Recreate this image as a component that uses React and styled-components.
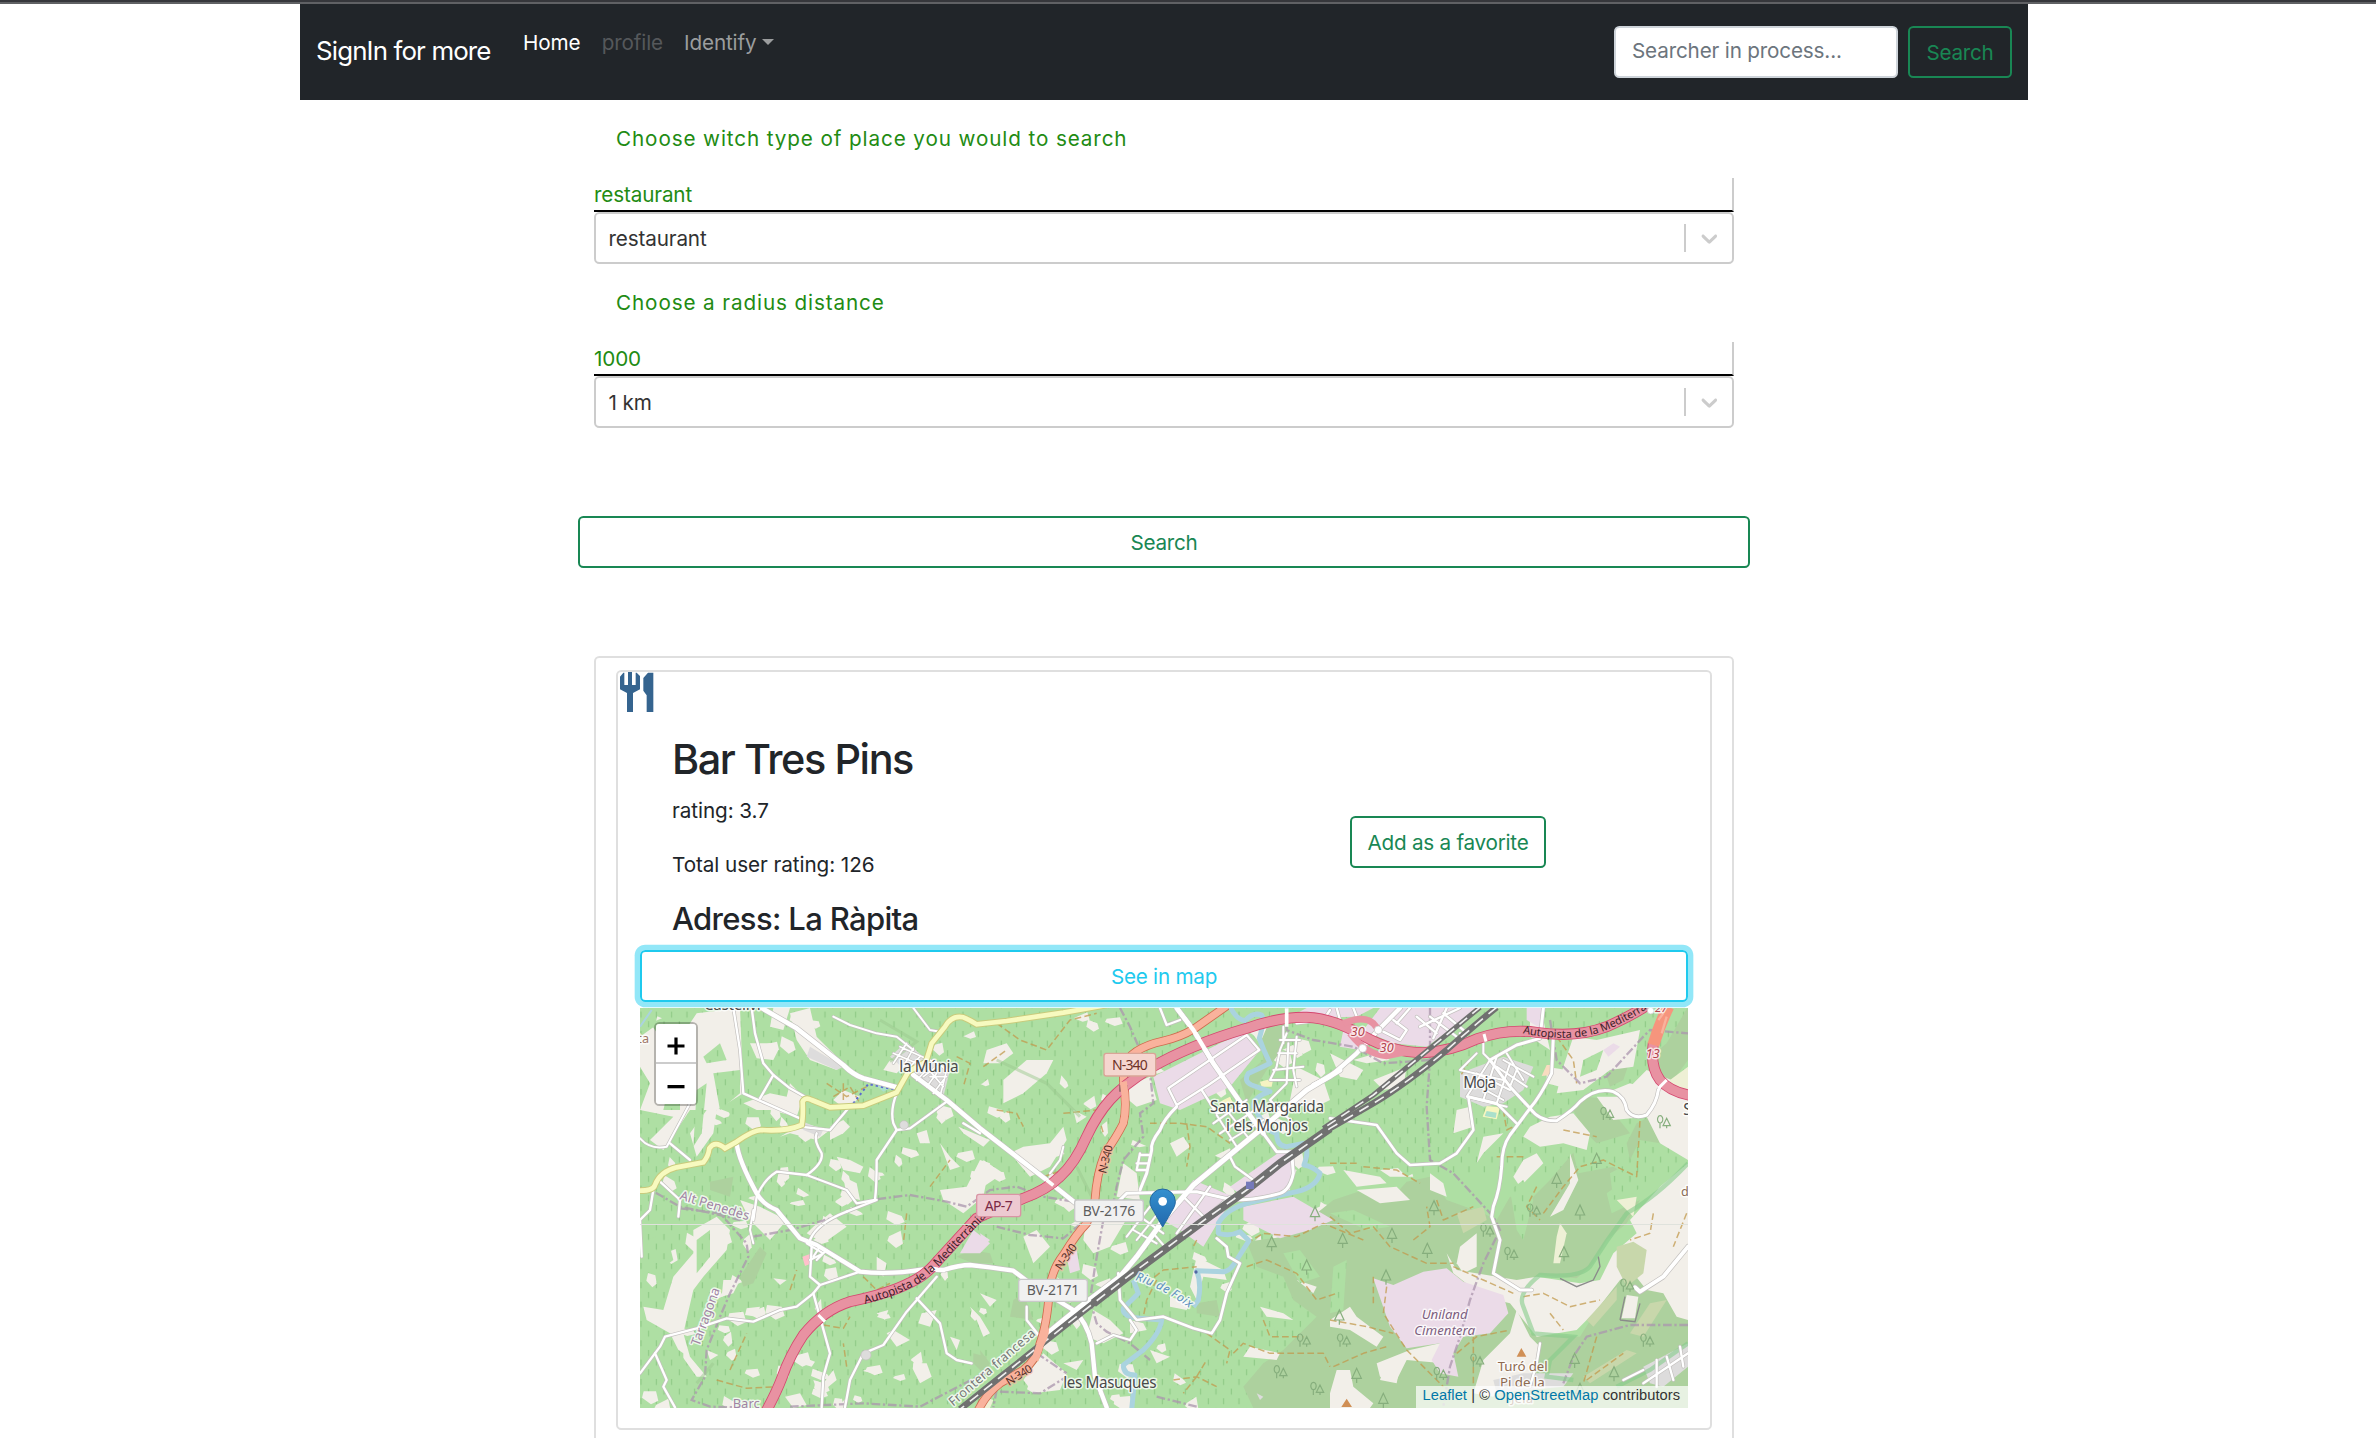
import React from "react";
import styled, { createGlobalStyle } from "styled-components";

const GlobalStyle = createGlobalStyle`
  *, *::before, *::after { box-sizing: border-box; }
  html, body { margin: 0; padding: 0; background: #fff; overflow: hidden; }
  body {
    font-family: Inter, "Liberation Sans", sans-serif;
    font-size: 20.7px;
    line-height: 32px;
    color: #212529;
  }
`;

const Page = styled.div`
  height: 1438px;
  overflow: hidden;
  display: flex;
  flex-direction: column;
`;

const WindowEdge = styled.div`
  flex: none;
  height: 4px;
  background: #36373b;
  border-bottom: 2px solid #606164;
`;

const Content = styled.div`
  flex: none;
  width: 2328px;
  display: flex;
  flex-direction: column;
  align-items: center;
`;

const Navbar = styled.nav`
  width: 1728px;
  height: 96px;
  padding: 0 16px;
  display: flex;
  align-items: center;
  background: #212529;
`;

const Brand = styled.a`
  color: #fff;
  font-size: 25.9px;
  line-height: 40px;
  letter-spacing: -0.87px;
  margin: -2px 32px 0 0;
  width: 175px;
  white-space: nowrap;
`;

const NavList = styled.div`
  display: flex;
  gap: 21.3px;
  margin-bottom: 18px;
  flex: 1;
`;

const NavItem = styled.a`
  color: ${(p) => p.$color};
  width: ${(p) => p.$width}px;
  letter-spacing: -0.15px;
  display: flex;
  align-items: center;
  white-space: nowrap;
`;

const Caret = styled.span`
  margin: -3px 0 0 6px;
  border-top: 6.4px solid currentColor;
  border-left: 6.4px solid transparent;
  border-right: 6.4px solid transparent;
`;

const SearchInput = styled.input`
  width: 284px;
  height: 52px;
  margin-right: 10px;
  padding: 6px 16px 10px;
  border: 2px solid #ced4da;
  border-radius: 5.3px;
  background: #fff;
  font: inherit;
  letter-spacing: -0.17px;
  &::placeholder { color: #6c757d; opacity: 1; }
`;

const Button = styled.button`
  display: block;
  height: 52px;
  width: ${(p) => p.$width}px;
  padding: 9px 0 7px;
  border: 2px solid ${(p) => p.$color};
  border-radius: 5.3px;
  background: transparent;
  color: ${(p) => p.$color};
  font: inherit;
  line-height: 32px;
  letter-spacing: -0.25px;
  text-align: center;
  white-space: nowrap;
  box-shadow: ${(p) => (p.$focused ? "0 0 0 5.33px rgba(13, 202, 240, 0.45)" : "none")};
`;

const Field = styled.div`
  width: 1140px;
  margin-top: 22px;
`;

const FieldLabel = styled.div`
  padding-top: 1px;
  margin: 0 0 23px 22px;
  color: #228b13;
  letter-spacing: 0.88px;
  white-space: nowrap;
`;

const FieldValue = styled.div`
  height: 34px;
  padding-top: 1px;
  line-height: 31px;
  color: #228b13;
  letter-spacing: -0.15px;
  border-right: 2px solid #ccc;
  border-bottom: 2px solid #000;
`;

const Select = styled.div`
  height: 52px;
  display: flex;
  align-items: center;
  padding-left: 12.5px;
  border: 2px solid #ccc;
  border-radius: 5.3px;
  color: #333;
  letter-spacing: -0.15px;
`;

const SelectText = styled.span`
  flex: 1;
  padding-top: 2px;
`;

const Separator = styled.span`
  width: 2px;
  height: 28px;
  margin: 0 10px;
  background: #ccc;
`;

const Chevron = styled.svg`
  width: 26.67px;
  height: 26.67px;
  margin-right: 9.3px;
  fill: #ccc;
`;

const SearchRow = styled.div`
  margin: 88px 0;
`;

const OuterCard = styled.section`
  width: 1140px;
  padding: 12px 20px 60px;
  border: 2px solid #dfdfdf;
  border-radius: 5.3px;
`;

const PlaceCard = styled.article`
  border: 2px solid #dfdfdf;
  border-radius: 5.3px;
  height: 760px;
`;

const PlaceIcon = styled.svg`
  display: block;
  width: 40px;
  height: 40px;
`;

const PlaceInfo = styled.div`
  display: flex;
  align-items: center;
  margin-top: 21px;
  height: 205px;
  margin-bottom: 12px;
`;

const PlaceText = styled.div`
  width: 732px;
  padding: 2px 0 0 54px;
`;

const PlaceName = styled.h2`
  margin: 0 0 10px;
  font-size: 41.4px;
  line-height: 51.2px;
  font-weight: 500;
  letter-spacing: -1.42px;
`;

const PlaceLine = styled.p`
  margin: 0 0 22px;
  letter-spacing: -0.07px;
`;

const PlaceAddress = styled.h4`
  margin: -3.5px 0 0.5px;
  font-size: 31px;
  line-height: 38.4px;
  font-weight: 500;
  letter-spacing: -0.66px;
`;

const FavoriteSlot = styled.div`
  padding-top: 13px;
`;

const MapSection = styled.div`
  padding: 0 20px 0 22px;
`;

const MapFrame = styled.div`
  position: relative;
  width: 1048px;
  height: 400px;
  margin-top: 6px;
  overflow: hidden;
`;

const MapCanvas = styled.svg`
  display: block;
  width: 1048px;
  height: 400px;
`;

const ZoomControl = styled.div`
  position: absolute;
  left: 14px;
  top: 14px;
  width: 44px;
  border: 2px solid rgba(0, 0, 0, 0.25);
  border-radius: 5.3px;
  background-clip: padding-box;
`;

const ZoomButton = styled.div`
  height: 40px;
  padding-top: ${(p) => (p.$last ? "1px" : "6px")};
  display: flex;
  align-items: center;
  justify-content: center;
  background: #fff;
  border-radius: ${(p) => (p.$last ? "0 0 3px 3px" : "3px 3px 0 0")};
  border-bottom: ${(p) => (p.$last ? "none" : "2px solid #ccc")};
  svg { width: 18px; height: 18px; fill: #000; }
`;

const Attribution = styled.div`
  position: absolute;
  right: 0;
  bottom: 0;
  width: 272px;
  height: 22px;
  padding-left: 6.5px;
  background: rgba(255, 255, 255, 0.7);
  font-family: "Liberation Sans", Arial, sans-serif;
  font-size: 14.67px;
  line-height: 19px;
  letter-spacing: 0.07px;
  color: #333;
  white-space: nowrap;
  a { color: #0078a8; }
`;

/* ---- map artwork; units are thirds of a pixel ---- */

const FOREST = [
  "1850,725 1950,712 2060,640 2110,600 2200,570 2290,590 2330,545 2400,530 2450,600 2560,640 2600,660 2640,590 2700,600 2760,540 2830,458 2845,520 2950,500 3000,530 2930,580 2945,640 3030,600 2990,670 2930,720 2890,790 2840,835 2730,825 2680,880 2700,1000 2850,1010 2950,850 2960,760 3010,720 3050,740 3050,800 3130,830 3174,960 3174,1224 1870,1224 1840,1160 1900,1090 1960,1050 2010,1000 2060,950 1990,900 1960,830 1880,800",
  "3110,130 3174,20 3174,180 3130,240 3060,250 3050,180",
  "2830,330 2870,290 2950,300 2960,350 3000,400 2900,430 2860,390",
  "3020,370 3070,345 3110,390 3090,430 3030,420 3000,480 2990,430",
  "2930,230 2990,140 3000,180 2980,240 2940,260",
  "240,545 310,530 300,590 240,570",
  "340,860 330,830 390,740 410,760 370,850",
  "1030,790 980,770 1020,750 1080,760 1090,790",
  "1180,880 1210,960 1140,950 1150,900",
  "1890,90 1960,60 1970,130 1910,210 1850,310 1830,240 1900,180",
  "1700,910 1760,900 1770,950 1700,940",
  "1030,1060 1070,1070 1060,1120 1030,1090",
  "1050,1050 1080,1090 1060,1140",
];

const BEIGE = [
  "30,110 100,60 160,100 200,40 330,24 340,280 260,330 250,400 200,470 180,400 230,330 180,330 100,450 60,420 130,350 30,330 60,250 30,200",
  "430,24 480,24 460,90 420,80", "420,130 445,150 430,180 380,175 360,130", "480,40 540,24 560,110 640,190 620,210 540,180 500,120",
  "380,330 340,310 420,280 470,290 480,250 520,290 500,350 420,330", "450,410 520,370 600,390 560,420 480,400",
  "610,300 640,270 690,290 650,330", "780,180 830,190 800,220 760,210", "330,600 390,620 470,660 420,720 360,660",
  "620,470 660,480 700,500 690,520 640,510", "640,530 680,550 690,600 650,590", "930,430 960,470 990,500 960,510",
  "930,570 1010,560 1050,480 1080,490 1060,590 1000,640 940,600", "985,380 1080,420 1060,440 1000,400", "860,400 890,390 900,430 870,430",
  "600,380 640,360 660,380 640,400 600,420", "190,690 260,650 300,690 290,750 220,830 190,870 160,1000 180,1070 230,1130 200,1130 150,1060 120,1000 50,960 40,920 100,930 130,830 190,760",
  "280,840 330,840 310,880 275,890", "430,835 470,840 450,855", "350,925 390,920 380,950 345,945", "515,1070 555,1085 545,1100 510,1090",
  "230,1050 265,1065 240,1080", "550,1140 580,1150 610,1110 620,1140 590,1165 555,1155", "465,1190 510,1180 530,1215 490,1224",
  "740,940 775,930 765,960", "790,990 840,1020 800,1040 770,1000", "875,940 920,930 900,980 865,970", "850,1090 890,1090 905,1130 870,1150 850,1110",
  "960,1010 990,1020 980,1050", "1020,920 1050,950 1080,1000 1060,1010 1040,960", "550,680 600,640 650,680 580,730 530,700", "740,770 770,790 760,830 740,810",
  "1120,240 1190,180 1270,180 1250,220 1180,280 1120,310", "1070,150 1130,130 1150,160 1110,190 1060,190", "1330,330 1370,350 1340,370",
  "1060,480 1120,520 1060,560", "1140,460 1180,440 1260,430 1300,380 1310,420 1260,500 1200,530", "1460,270 1560,230 1580,300 1520,320",
  "1180,710 1220,690 1260,740 1210,790", "1370,650 1500,640 1440,740 1390,760 1360,720", "1050,880 1100,900 1080,920", "1280,830 1340,880 1320,910",
  "1390,930 1440,960 1480,1000 1420,1030 1370,1010", "1300,1090 1360,1080 1340,1110", "1240,1060 1310,1120 1290,1170 1210,1180 1180,1140", "1560,1050 1620,1070 1580,1090",
  "1700,770 1780,810 1790,840 1720,830 1700,900 1680,860", "1620,890 1680,910 1670,930 1620,920", "1500,960 1540,970 1550,990 1500,1000",
  "1620,430 1660,410 1680,440 1640,470", "1480,490 1520,520 1530,600 1460,590", "1850,80 1920,60 1890,130", "2000,200 2080,240 2100,300 2040,330 1980,300", "1930,480 2000,510 1980,560",
  "2100,160 2200,210 2180,240 2130,230", "2230,240 2330,200 2320,260 2260,270", "2170,180 2240,160 2280,180 2210,190", "2700,40 2740,60 2760,150 2700,110",
  "2750,200 2810,210 2790,260 2750,250", "2830,110 2900,120 3030,90 3010,200 2940,210 2860,270 2780,280 2800,200", "3000,260 3050,210 3174,260 3174,480 3090,430 3050,350 2950,360 2900,290 2980,290",
  "2700,380 2760,350 2830,340 2880,400 2870,450 2800,430 2730,440 2680,410", "2950,270 3000,250 3090,280 3020,350", "2480,330 2520,320 2530,380 2470,400",
  "2560,410 2620,400 2560,460 2540,490", "2680,480 2720,460 2740,490 2670,560 2650,530", "2140,510 2250,530 2270,550 2180,560", "2180,570 2300,560 2340,600 2250,610",
  "2250,510 2340,500 2350,530 2280,530", "2400,520 2440,550 2450,590 2400,570", "2820,460 2845,540 2800,630 2760,650 2820,550",
  "2490,740 2540,700 2540,800 2500,820 2480,790", "2450,760 2480,810 2660,840 2720,830 2850,850 2910,840 2950,760 3020,700 3000,660 3090,560 3174,490 3174,960 3140,950 3100,880 3050,870 3010,820 2970,840 2900,930 2840,990 2720,1010 2680,960 2640,910 2560,890 2470,820",
  "2100,960 2160,920 2180,950 2260,1010 2240,1040 2160,990 2100,980", "2240,1090 2340,1050 2430,1030 2440,1090 2330,1080 2300,1140 2250,1130",
  "2560,1080 2640,1000 2660,930 2700,1010 2730,1040 2700,1160 2620,1130 2590,1190 2530,1180", "2100,1180 2120,1110 2160,1110 2170,1160 2230,1210 2220,1224 2100,1224",
  "2260,1110 2310,1100 2300,1150 2250,1140", "2000,840 2060,860 2050,880", "1890,920 1960,940 1990,960 1910,950", "1860,1040 1950,1060 1940,1080 1840,1070",
  "1680,660 1730,640 1720,660",
];

const VINEYARD = [
  "2300,500 2420,420 2460,440 2430,480 2330,530", "2640,570 2680,540 2710,600 2680,720 2660,690", "2110,800 2150,780 2140,930 2100,940",
  "2940,520 3050,460 3090,510 3010,580 2950,600", "2100,640 2170,630 2280,680 2210,690", "1960,760 2010,750 2070,830 2010,850",
  "1870,960 1930,970 1940,1010 1850,1030",
];

const CLEARINGS = [
  "60,70 130,40 150,80 90,110", "220,170 270,130 290,180 230,190", "200,270 230,250 215,400 190,440", "110,290 150,260 150,330 100,330",
  "250,220 330,210 330,280 270,330", "50,720 110,700 130,780 90,810 60,770", "200,720 240,690 240,770 200,820", "280,400 310,310 315,420 290,440",
  "100,1020 160,1060 160,1090 100,1050", "30,40 60,30 70,60 35,80", "150,150 190,120 180,170", "2860,180 2920,150 2900,210 2850,230",
];

const PURPLE = [
  "1570,230 1770,130 1850,95 1890,150 1800,260 1650,330 1590,310",
  "1800,560 1950,455 1985,450 1980,570 1860,605", "1600,660 1690,540 1810,590 1780,640 1720,740 1650,690", "1840,620 1990,590 2110,660 2040,690 1950,715 1840,660",
  "2030,24 2230,24 2180,50 2100,52 2000,40", "2250,24 2550,24 2390,140 2290,130 2220,100 2190,150 2130,140 2140,90 2200,90",
  "2230,835 2290,855 2380,815 2450,805 2500,845 2620,885 2635,940 2580,1000 2500,1010 2470,1060 2485,1130 2430,1120 2405,1080 2430,1030 2330,1045 2280,980",
  "2690,24 2740,24 2740,90 2690,60", "2920,150 2950,130 2970,140 2935,170", "1310,770 1340,750 1350,810 1320,820", "990,760 1030,690 1080,730 1050,760",
  "1050,700 1080,720 1060,740",
];

const GREY_AREAS = [
  "780,170 830,125 890,180 960,210 940,290 850,230", "540,140 640,200 620,210 530,170", "2490,220 2620,170 2710,200 2680,270 2620,310 2560,320 2490,290",
  "520,365 580,390 570,410 520,390", "3040,1100 3174,1030 3174,1100 3100,1160 3060,1150", "2590,1140 2680,1120 2830,1120 2800,1160 2600,1180",
  "1880,1180 1900,1190 1890,1200",
];

const SCRUB = [
  "2960,740 3010,725 3050,750 3040,820 2990,860 2960,800", "2870,960 2960,860 2960,900 2890,980", "2480,640 2560,620 2570,660 2500,700",
  "3000,1000 3060,910 3110,900 3040,1010", "2860,1130 2990,1050 3020,1060 2880,1150",
];

const PALE = ["2960,600 3020,590 3010,650", "3120,240 3174,200 3174,270 3120,250", "2790,670 2810,700 2790,790 2770,790 2780,710", "1060,1190 1090,1200 1080,1224 1050,1224"];

const WHITE_ROADS = [
  [14, "M395 24L500 85L640 195Q670 225 700 235L800 262"],
  [14, "M850 225L950 300L1050 385L1250 540L1340 612"],
  [13, "M320 430Q325 480 380 580Q400 615 440 630L510 715L560 735L690 815Q780 825 880 808L940 810Q990 795 1020 795L1080 802L1150 812L1200 850L1330 930Q1370 965 1385 1030L1395 1130L1430 1222"],
  [15, "M2130 210L2030 270L1890 390L1690 555L1600 660L1520 770L1470 830L1350 920L1240 1010"],
  [14, "M1640 24L1690 90L1750 190L1840 320L1900 400"],
  [9, "M1900 400L1940 455L1985 455L1990 520Q1980 570 1950 580Q1880 600 1810 600L1700 575L1490 580L1450 620"],
  [9, "M1640 320Q1600 360 1590 390Q1560 430 1565 450L1550 520L1530 570"],
  [13, "M2050 255L2100 230L2180 160L2245 90L2310 24"],
  [9, "M2740 24L2730 115L2660 135L2580 180L2640 260L2700 325Q2730 365 2780 362Q2830 330 2850 305Q2900 260 2950 275Q2985 290 2990 330Q3010 360 3050 345Q3080 310 3085 270L3100 245"],
  [9, "M2770 110L2765 220Q2730 290 2700 325L2640 405Q2615 440 2615 500Q2610 570 2590 620L2585 650L2610 720L2590 820L2670 870L2705 870"],
  [8, "M2100 355L2240 375L2300 460L2340 495L2430 490L2480 460L2530 390L2515 290L2600 310L2660 370"],
  [12, "M3174 740L3100 830L3030 875L3015 862"],
  [7, "M310 24L330 150L340 280L430 320L510 355"],
  [7, "M365 24L375 100L400 190L430 225L390 295"],
  [7, "M430 225L480 265L525 290"],
  [7, "M800 280Q780 330 790 370L800 390L740 480Q740 560 735 600L680 610L650 570L530 525L440 515Q400 540 380 590L370 660"],
  [7, "M950 305L840 385L800 390"], [7, "M655 325L600 390L510 380"],
  [7, "M560 400Q550 420 575 460Q580 490 530 525"], [6, "M850 24L900 90L930 95"], [6, "M610 50L660 75L740 100L800 110L850 150"],
  [7, "M570 855L690 815"], [7, "M30 1120L90 1040L105 1010L200 985L290 955L370 965L450 930L500 920L550 880L570 855L540 830L545 740"],
  [7, "M550 880L575 970L600 1060L580 1130L575 1222"], [7, "M920 830L830 935L760 1035L700 1060Q680 1100 660 1140L645 1222"],
  [7, "M860 895L930 970L950 1060L980 1080L1025 1090"], [7, "M75 1060L110 1140L100 1160L135 1222"],
  [6, "M30 415Q60 450 110 440L180 310"], [7, "M90 545L150 600L145 650"], [7, "M120 430L180 480"], [7, "M70 570L60 630L30 660L35 770"],
  [6, "M370 630L360 690L370 730"], [7, "M540 720Q560 670 650 635"], [7, "M650 635L740 600"],
  [8, "M1465 820L1470 900L1520 960L1600 950L1690 985L1745 1000L1770 960L1790 880L1830 790L1795 770L1790 740L1760 715"],
  [7, "M1400 1030L1450 1005L1500 1020L1520 990L1500 960"], [7, "M1190 920L1190 960L1230 1010"],
  [7, "M1615 265L1850 105L1888 150L1735 255L1640 315Z"], [7, "M1715 270L1760 340L1850 320"],
  [7, "M1590 24L1610 75L1650 60"], [6, "M1760 345L1820 440M1790 330L1860 420M1750 370L1850 300M1770 400L1890 320M1800 420L1900 360"],
  [6, "M1970 100L1950 150L1940 200L1920 240M2000 110L1990 210L2000 260M1950 120L2010 120M1945 160L2000 160M1930 210L2020 200M1920 240L2010 240M1960 80L1960 130M1975 130L1970 250L1920 300L1990 370"],
  [6, "M1530 650L1600 700M1510 690L1580 730M1560 620L1490 710M1600 620L1520 720M1620 640L1540 750M1570 700L1600 735"],
  [7, "M1660 590L1720 650M1740 560L1640 700M1800 590L1740 640"],
  [7, "M1800 470L1815 500L1870 540"], [7, "M1530 460L1520 510M1560 465L1530 465M1555 490L1520 490M1550 510L1520 510"],
  [7, "M2000 70L2080 60L2100 30M2120 24L2130 60M2170 24L2180 50"],
  [7, "M2260 95L2310 120L2330 90L2290 60M2340 24L2300 70M2410 115L2450 24M2360 50L2420 100M2370 80L2490 24M2400 50L2480 110M2440 40L2500 90M2490 100L2510 120"],
  [6, "M2560 100L2560 160L2580 180L2510 290L2630 320M2540 160L2490 210L2620 240M2540 220L2640 270M2530 250L2620 300M2600 170L2560 300M2630 160L2680 240M2640 190L2600 310M2660 210L2640 260M2600 200L2690 260M2620 180L2710 230"],
  [5, "M790 160L860 190M810 140L920 190M830 130L790 190M850 145L820 200M870 170L830 210M880 190L940 260M910 180L950 210L930 290L850 220M890 210L860 240M920 220L890 260M940 240L910 280M900 230L950 230M880 230L920 200"],
  [6, "M530 730L580 760L540 780M570 740L550 770M590 750L560 780"],
  [7, "M1000 370L1050 400M1395 1130L1450 1150M1420 1150L1410 1180"],
  [7, "M2730 1030L2720 1090L2700 1160M2980 1140L3040 1110M3080 1080L3080 1160M3110 1070L3130 1140M3150 1040L3160 1100M3040 1150L3174 1060"],
  [6, "M1300 440L1290 480L1260 520"],
];

const TRACKS = [
  "M1100 70L1170 120L1250 150L1320 60L1400 40", "M1060 200L1130 150", "M1560 370L1650 370L1730 380L1800 430", "M1670 370L1680 440L1670 500",
  "M1240 530L1330 500M1300 340L1400 330L1420 400", "M580 975L640 985L660 950", "M480 870L500 810", "M260 1140L350 1165L440 1160", "M300 1110L350 1000",
  "M830 640L820 730M650 1100L640 1030", "M590 250L650 290L710 260M610 290L660 260L690 310M640 300L640 250", "M900 560L960 480M980 170L1020 190L1000 260",
  "M2420 600L2440 660L2530 620", "M2520 180L2490 230M2620 330L2630 390L2670 370", "M2200 500L2300 510L2370 550M2100 490L2180 490",
  "M2740 640L2800 560L2850 500L2920 480L3020 530L3030 360", "M2800 390L2900 410", "M2780 110L2830 180L2840 250", "M2100 650L2160 700L2230 680L2280 740L2390 790L2470 790",
  "M1850 730L1900 700L2000 710L2080 670L2200 720", "M2270 860L2260 940L2330 1050L2440 1160", "M2470 800L2560 840L2650 880M2230 830L2230 910",
  "M1700 720L1690 740M1550 850L1600 810L1700 800M1580 840L1550 900L1540 950", "M1850 800L1910 780L2000 820L2060 900L2120 880", "M1810 1060L1840 1030L1920 1060L2080 1060L2100 1100",
  "M1630 1140L1700 1130L1760 1160M1700 1130L1730 1080M1700 1130L1660 1180", "M2680 890L2740 880L2820 920L2910 900", "M2480 1060L2540 1010L2640 990M2530 1010L2530 1150",
  "M2760 940L2800 990M2900 1010L2880 1080L2860 1150M2870 1140L2980 1060", "M3070 640L3060 700L3000 720M3170 640L3130 740", "M2720 560L2690 620L2730 660M2600 470L2690 470M2350 720L2400 680L2390 620",
  "M1900 960L1920 1010L2020 1010M1730 1000L1800 1050L1790 1090", "M2110 1100L2200 1060L2270 1040M2100 960L2210 980L2290 1000", "M700 830L740 870L780 850M1100 330L1160 340L1180 380",
];

const BORDERS = [
  "M30 565L80 580L150 620L270 645L330 660", "M150 625L270 640L350 730L355 770L300 880L270 950L230 1050L225 1130L185 1200L240 1220L330 1222",
  "M370 710L480 690L620 650L720 600L840 585L950 605L1010 620L1080 570L1160 560L1240 590L1330 605", "M1470 24L1500 80L1530 150L1560 220L1570 310L1530 340L1540 410L1480 480L1460 560L1450 610",
  "M1100 680L1200 705L1300 715L1400 630M1420 660L1395 800L1380 900L1400 970L1430 995L1500 1030L1560 1080", "M1970 24L1970 90L2050 120L2170 140L2260 190L2400 180",
  "M2400 24L2400 180L2390 320L2400 480L2470 520L2590 650L2610 690L2560 790L2520 900L2490 1010L2460 1100L2440 1220", "M2760 60L2780 180L2850 250L2930 230L3040 110L3060 90L3174 100",
  "M480 1220L700 1210L870 1220L1080 1110", "M1110 1175L1230 1180L1310 1130M1220 1060L1310 1120M1100 1170L1090 1222M1580 1190L1700 1220", "M3174 975L3000 975L2870 1010L2830 1070L2800 1150",
];

const TREES = [[2138, 740], [2286, 725], [2412, 642], [2128, 970], [2392, 770], [2268, 850], [2850, 655], [2802, 780], [2834, 1100], [2952, 1140], [1925, 750], [2055, 660], [2030, 820], [2780, 560], [2900, 500], [2180, 1145], [2260, 1220], [2850, 1190]];
const BUSHES = [[2700, 650], [2632, 780], [2560, 710], [2920, 360], [3090, 385], [2130, 1040], [2980, 875], [3040, 1040], [2010, 1040], [1940, 1135], [2050, 1185], [2420, 1140], [2530, 1100]];

const MOTORWAY = "M405 1240Q440 1175 455 1135Q480 1065 520 1005Q580 930 660 905Q780 880 840 848Q890 825 925 780L1040 655Q1070 640 1180 595Q1250 570 1290 530Q1335 490 1370 410Q1400 345 1440 300Q1480 255 1560 205Q1680 135 1850 85Q1950 50 2030 52Q2110 55 2200 108Q2290 158 2380 158Q2460 155 2540 117Q2630 85 2720 97Q2840 115 2930 80Q3010 45 3060 10";
const MOTORWAY_EAST = "M3070 130Q3060 200 3090 240Q3120 275 3180 286";
const NATIONAL = "M1790 18L1690 88Q1650 112 1600 123Q1500 145 1482 200L1480 240Q1492 320 1480 370Q1460 410 1425 460Q1400 520 1395 600L1370 670Q1340 700 1300 765Q1265 810 1258 870Q1252 970 1230 1030Q1220 1080 1180 1110L1110 1150Q1070 1180 1045 1230";
const SECONDARY = "M30 572Q70 572 75 555Q90 515 140 502L220 487Q235 470 238 445Q255 420 285 445L320 425Q370 390 395 390Q470 395 515 375Q520 350 518 305Q525 290 545 300L600 322L700 317L800 277L835 215L888 185L905 130L945 80Q965 45 1000 52Q1020 60 1040 73L1130 63L1300 38L1430 15";
const RAIL = "M2600 22Q2540 70 2450 150Q2330 250 2230 310L2100 385L1950 490L1850 570L1730 655L1500 825L1390 910L1250 1020L1110 1132L990 1228";
const RAIL_BRANCH = "M2550 22L2370 170L2230 285L2080 385";
const RAIL_YARD = "M2100 385L1950 490L1850 570L1730 655L1500 825L1390 910";
const RIVER = "M1800 20Q1820 60 1845 62Q1870 35 1895 45Q1905 60 1888 115Q1900 150 1920 190Q1880 210 1855 220Q1840 245 1865 255L1920 275Q1870 290 1870 320L1900 370Q1915 395 1940 400Q1940 440 1970 440L2020 430Q2040 450 2022 495Q2050 500 2070 520Q2060 560 2000 575Q1930 590 1860 608Q1790 625 1765 670L1765 700Q1800 710 1830 695L1857 722L1820 780Q1800 815 1780 815L1700 812Q1715 850 1705 900L1690 920";
const RIVER_SOUTH = "M1510 840L1525 880L1480 925Q1475 950 1530 955L1595 960Q1590 1000 1540 1050L1480 1095Q1480 1125 1515 1125L1505 1230";

function makeFields() {
  let seed = 91;
  const rnd = () => {
    seed = (seed * 16807) % 2147483647;
    return seed / 2147483647;
  };
  return Array.from({ length: 150 }, () => {
    const x = 40 + rnd() * 2050;
    const y = 30 + rnd() * 1180;
    const w = 14 + rnd() * 30;
    const h = 10 + rnd() * 24;
    const a = rnd() * 20 - 10;
    return `${x | 0},${(y + a) | 0} ${(x + w) | 0},${(y - a) | 0} ${(x + w * 1.2) | 0},${(y + h) | 0} ${(x + w * 0.6) | 0},${(y + h * 1.4) | 0} ${(x - 5) | 0},${(y + h * 0.7) | 0}`;
  });
}
const FIELDS = makeFields();

const Poly = ({ list, fill }) => (
  <g fill={fill}>{list.map((p, i) => <polygon key={i} points={p} />)}</g>
);

const MapText = styled.text`
  font-family: "Noto Sans", "Open Sans", sans-serif;
  font-size: ${(p) => p.$size || 46}px;
  font-style: ${(p) => (p.$italic ? "italic" : "normal")};
  fill: ${(p) => p.$fill || "#4a4a4a"};
  stroke: ${(p) => p.$halo || "rgba(255,255,255,0.75)"};
  stroke-width: ${(p) => (p.$halo === "none" ? 0 : 9)}px;
  stroke-linejoin: round;
  paint-order: stroke;
`;

const Shield = ({ x, y, w, h, fill, stroke, color, label }) => (
  <g>
    <rect x={x} y={y} width={w} height={h} rx="7" fill={fill} stroke={stroke} strokeWidth="4" />
    <MapText x={x + w / 2} y={y + h / 2 + 15} $size={42} $fill={color} $halo="none" textAnchor="middle" textLength={w - 48}>{label}</MapText>
  </g>
);

const Map = () => (
  <MapCanvas viewBox="30 24 3144 1200">
    <defs>
      <pattern id="vines" width="46" height="58" patternUnits="userSpaceOnUse">
        <path d="M10 6V24M33 35V53" stroke="#8fc986" strokeWidth="3.5" />
      </pattern>
      <linearGradient id="pin" x1="0" y1="0" x2="0" y2="1">
        <stop offset="0" stopColor="#3390cf" />
        <stop offset="1" stopColor="#2369ad" />
      </linearGradient>
      <path id="ap-west" d="M705 912Q800 888 870 848Q925 805 1000 720L1070 650" />
      <path id="ap-east" d="M2678 100Q2820 130 2920 94Q3000 62 3060 20L3250 -110" />
      <path id="river-name" d="M1515 840Q1600 865 1685 930" />
    </defs>
    <rect x="30" y="24" width="3144" height="1200" fill="#aedfa3" />
    <rect x="30" y="24" width="2070" height="1200" fill="url(#vines)" />
    <rect x="2100" y="24" width="1074" height="500" fill="url(#vines)" />
    <Poly list={FIELDS} fill="#f2efe9" />
    <Poly list={FOREST} fill="#add19e" />
    <Poly list={BEIGE} fill="#f2efe9" />
    <Poly list={VINEYARD} fill="#aedfa3" />
    <Poly list={CLEARINGS} fill="#aedfa3" />
    <Poly list={VINEYARD} fill="url(#vines)" />
    <Poly list={CLEARINGS} fill="url(#vines)" />
    <Poly list={PURPLE} fill="#ebdbe8" />
    <Poly list={GREY_AREAS} fill="#dddcdc" />
    <Poly list={SCRUB} fill="#c8d7ab" />
    <Poly list={PALE} fill="#eef0d5" />
    <polygon points="2570,318 2610,322 2600,358 2558,350" fill="#f7f6c0" />
    <polygon points="2570,333 2600,338 2597,354 2564,348" fill="#aae0cb" />
    <polygon points="2750,195 2772,195 2768,225 2735,228" fill="#f9dcc0" />
    <polygon points="517,770 540,762 545,790 525,798" fill="#ffc0cb" />
    <polygon points="1780,300 1800,290 1810,310 1780,320 1765,310" fill="#f6f3c2" />
    <polygon points="1890,245 1930,235 1925,260 1895,260" fill="#f6f3c2" />
    <polygon points="730,250 790,260 760,275" fill="#aae0cb" />
    <g fill="none" stroke="#c29a4d" strokeWidth="4.5" strokeDasharray="20 10" strokeLinejoin="round" opacity="0.75">
      {TRACKS.map((d) => <path key={d} d={d} />)}
    </g>
    <g fill="none" stroke="#ab96ad" strokeWidth="7" strokeDasharray="26 8 7 8" opacity="0.75">
      {BORDERS.map((d) => <path key={d} d={d} />)}
    </g>
    <path d="M3174 490Q3080 590 2990 640Q2930 720 2880 800Q2850 835 2730 825Q2660 880 2680 920L2710 1000L2830 1010L2760 1080L2750 1130L2830 1140M3174 1030L3060 1110L2960 1160" fill="none" stroke="#86cc8b" strokeWidth="13" opacity="0.6" />
    <path d="M780 185L860 125L750 60M1100 180L1250 250L1350 350M1400 620L1340 500M200 1150L250 1090" fill="none" stroke="#9bc98f" strokeWidth="9" opacity="0.5" />
    <g fill="none" stroke="#aad3df" strokeLinejoin="round" strokeWidth="15">
      <path d={RIVER} />
      <path d={RIVER_SOUTH} />
      <path d="M30 80L65 30" strokeWidth="6" />
    </g>
    <path d="M670 310L715 252L800 270" fill="none" stroke="#5b6bd0" strokeWidth="6" strokeDasharray="7 9" />
    <g fill="none" stroke="#c3c0be" strokeLinecap="round" strokeLinejoin="round">
      {WHITE_ROADS.map(([w, d]) => <path key={d} d={d} strokeWidth={w + 4} />)}
    </g>
    <g fill="none" stroke="#fff" strokeLinecap="round" strokeLinejoin="round">
      {WHITE_ROADS.map(([w, d]) => <path key={d} d={d} strokeWidth={w} />)}
    </g>
    <g fill="#fff" stroke="#c3c0be" strokeWidth="2">
      <circle cx="822" cy="375" r="13" fill="#dddcdc" />
      <circle cx="708" cy="1065" r="15" fill="#dddcdc" />
    </g>
    <g fill="none">
      <path d={SECONDARY} stroke="#c9cb7c" strokeWidth="20" />
      <path d={SECONDARY} stroke="#f7fabf" strokeWidth="14" />
      <path d={NATIONAL} stroke="#cf6a4e" strokeWidth="26" />
      <path d={NATIONAL} stroke="#f9b29c" strokeWidth="21" />
      <path d={MOTORWAY} stroke="#d4486f" strokeWidth="33" />
      <path d={MOTORWAY} stroke="#e892a2" strokeWidth="28" />
      <path d="M2140 70Q2200 45 2230 70L2245 88M2160 100Q2210 165 2270 168L2330 155" stroke="#e892a2" strokeWidth="20" />
      <path d={MOTORWAY_EAST} stroke="#d4486f" strokeWidth="33" />
      <path d={MOTORWAY_EAST} stroke="#e892a2" strokeWidth="28" />
      <path d="M3115 20Q3090 70 3070 135" stroke="#f6957d" strokeWidth="36" />
      <path d="M3110 50L3095 100M3085 60L3100 40" stroke="#f9b29c" strokeWidth="7" />
      <path d="M1470 255V275M1490 255V280" stroke="#7b5a55" strokeWidth="4" />
      <path d="M2562 102L2568 125M2395 150L2405 140M3085 265L3110 240M565 945L585 965" stroke="#fff" strokeWidth="9" />
      <path d="M1480 245Q1492 320 1480 370" stroke="#f9b29c" strokeWidth="21" />
      <path d={RAIL} stroke="#707070" strokeWidth="19" />
      <path d={RAIL_YARD} stroke="#707070" strokeWidth="25" />
      <path d={RAIL_BRANCH} stroke="#707070" strokeWidth="15" />
      <path d={RAIL} stroke="#f0f0f0" strokeWidth="5" strokeDasharray="32 22" />
      <path d={RAIL_BRANCH} stroke="#f0f0f0" strokeWidth="5" strokeDasharray="30 20" />
      <path d="M1245 985Q1250 1000 1230 1035L1215 1080" stroke="#f9b29c" strokeWidth="22" />
    </g>
    <g fill="#fff" stroke="#c3c0be" strokeWidth="2">
      <circle cx="2245" cy="90" r="12" /><circle cx="2198" cy="145" r="12" /><circle cx="3062" cy="32" r="10" />
    </g>
    <path d="M1640 24L1690 90L1750 190" stroke="#fff" strokeWidth="13" fill="none" />
    <path d="M1970 25V80M1250 540L1270 556M905 805L945 812" stroke="#fff" strokeWidth="11" fill="none" />
    <rect x="1848" y="545" width="24" height="22" fill="#7579b9" />
    <circle cx="1698" cy="816" r="5" fill="#5266a3" />
    <path d="M2790 835L2840 860L2890 840L2910 800L2905 770M2970 960L3015 965L3030 910M2970 960L2985 890" fill="none" stroke="#8b8b8b" strokeWidth="4" />
    <polygon points="2990,885 3025,890 3015,955 2975,955" fill="#f2efe9" />
    <g fill="none" stroke="#86ae7d" strokeWidth="3.5">
      {TREES.map(([x, y], i) => <path key={i} d={`M${x} ${y}v-10m0-30l-14 30h28zm0 30v14`} />)}
      {BUSHES.map(([x, y], i) => <path key={i} d={`M${x} ${y}v-16a8 11 0 1 1 1 0M${x + 20} ${y}v-8m0-22l-11 22h22z`} />)}
    </g>
    <path d="M2660 1070L2674 1044L2689 1070ZM2134 1221L2150 1196L2166 1221Z" fill="#d08f55" />
    <path d="M30 673.5H3174" stroke="#dfe2dc" strokeWidth="3.5" />

    <MapText x="808" y="217" textLength="178">la Múnia</MapText>
    <MapText x="1740" y="336" textLength="342">Santa Margarida</MapText>
    <MapText x="1788" y="393" textLength="246">i els Monjos</MapText>
    <MapText x="2500" y="263" textLength="98">Moja</MapText>
    <MapText x="1300" y="1165" textLength="280">les Masuques</MapText>
    <MapText x="222" y="31" textLength="170">Castellví</MapText>
    <MapText x="3160" y="345">Sant</MapText>
    <MapText x="3153" y="588" $size={38} $fill="#8a6d56">de</MapText>
    <MapText x="22" y="130" $size={38} $fill="#a07766">ta</MapText>
    <MapText x="2375" y="957" $size={40} $italic $fill="#7d6080" textLength="138">Uniland</MapText>
    <MapText x="2353" y="1005" $size={40} $italic $fill="#7d6080" textLength="182">Cimentera</MapText>
    <MapText x="2603" y="1112" $size={40} $fill="#8e6a50" textLength="150">Turó del</MapText>
    <MapText x="2610" y="1160" $size={40} $fill="#8e6a50" textLength="134">Pi de la</MapText>
    <MapText x="2643" y="1208" $size={38} $fill="#8e6a50" textLength="66">Jela</MapText>
    <MapText $size={39} $fill="#a184a4" transform="translate(147 598) rotate(17)" textLength="216">Alt Penedès</MapText>
    <MapText $size={39} $fill="#a184a4" transform="translate(208 1040) rotate(-70)" textLength="182">Tarragona</MapText>
    <MapText x="308" y="1224" $size={39} $fill="#a184a4">Barc</MapText>
    <MapText $size={38} $fill="#777" transform="translate(970 1220) rotate(-41)" textLength="330">Frontera francesa</MapText>
    <MapText $size={34} $fill="#4d2c25" $halo="rgba(249,178,156,.6)" transform="translate(1428 522) rotate(-76)" textLength="86">N-340</MapText>
    <MapText $size={34} $fill="#4d2c25" $halo="rgba(249,178,156,.6)" transform="translate(1293 812) rotate(-55)" textLength="86">N-340</MapText>
    <MapText $size={34} $fill="#4d2c25" $halo="rgba(249,178,156,.6)" transform="translate(1137 1158) rotate(-32)" textLength="86">N-340</MapText>
    <MapText $size={35} $fill="#41222b" $halo="none"><textPath href="#ap-west" textLength="458">Autopista de la Mediterrània</textPath></MapText>
    <MapText $size={33} $fill="#41222b" $halo="none"><textPath href="#ap-east">Autopista de la Mediterrània</textPath></MapText>
    <MapText $size={36} $italic $fill="#5b8fc0"><textPath href="#river-name" textLength="185">Riu de Foix</textPath></MapText>
    <MapText x="2162" y="108" $size={38} $italic $fill="#b3434e" textLength="42">30</MapText>
    <MapText x="2249" y="157" $size={38} $italic $fill="#b3434e" textLength="42">30</MapText>
    <MapText x="3047" y="174" $size={38} $italic $fill="#b3434e" textLength="42">13</MapText>
    <MapText x="3075" y="36" $size={34} $italic $fill="#b3434e">27</MapText>

    <Shield x={1422} y={160} w={155} h={68} fill="#f5d6cf" stroke="#d9a597" color="#6e3228" label="N-340" />
    <Shield x={1040} y={583} w={132} h={67} fill="#edc9d1" stroke="#d995a5" color="#7b2946" label="AP-7" />
    <Shield x={1334} y={600} w={206} h={65} fill="#f1f1f1" stroke="#c9c9c9" color="#5e5e5e" label="BV-2176" />
    <Shield x={1166} y={838} w={206} h={66} fill="#f1f1f1" stroke="#c9c9c9" color="#5e5e5e" label="BV-2171" />

    <path d="M1598 681L1571 634C1565 624 1560 616 1560 605A38 38 0 0 1 1636 605C1636 616 1631 624 1625 634Z" fill="url(#pin)" stroke="#2468a2" strokeWidth="3" />
    <circle cx="1598" cy="604" r="13" fill="#fff" />
  </MapCanvas>
);

const SelectField = ({ label, value, text }) => (
  <Field>
    <FieldLabel>{label}</FieldLabel>
    <FieldValue>{value}</FieldValue>
    <Select>
      <SelectText>{text}</SelectText>
      <Separator />
      <Chevron viewBox="0 0 20 20">
        <path d="M4.516 7.548c0.436-0.446 1.043-0.481 1.576 0l3.908 3.747 3.908-3.747c0.533-0.481 1.141-0.446 1.574 0 0.436 0.445 0.408 1.197 0 1.615-0.406 0.418-4.695 4.502-4.695 4.502-0.217 0.223-0.502 0.335-0.787 0.335s-0.57-0.112-0.789-0.335c0 0-4.287-4.084-4.695-4.502s-0.436-1.17 0-1.615z" />
      </Chevron>
    </Select>
  </Field>
);

export default function App() {
  return (
    <Page>
      <GlobalStyle />
      <WindowEdge />
      <Content>
        <Navbar>
          <Brand>SignIn for more</Brand>
          <NavList>
            <NavItem $color="#fff" $width={57.5}>Home</NavItem>
            <NavItem $color="#55585b" $width={61}>profile</NavItem>
            <NavItem $color="#9b9d9e" $width={92}>Identify<Caret /></NavItem>
          </NavList>
          <SearchInput placeholder="Searcher in process..." />
          <Button $color="#198754" $width={104}>Search</Button>
        </Navbar>
        <SelectField label="Choose witch type of place you would to search" value="restaurant" text="restaurant" />
        <SelectField label="Choose a radius distance" value="1000" text="1 km" />
        <SearchRow>
          <Button $color="#198754" $width={1172}>Search</Button>
        </SearchRow>
        <OuterCard>
          <PlaceCard>
            <PlaceIcon viewBox="0 0 120 120">
              <path fill="#35648f" d="M6 14L16 2H19V39H30V0H42V39H53V2H56L66 12V52L45 63V120H27V63L6 52ZM76 18L90 2H106V120H86V70L76 56Z" />
            </PlaceIcon>
            <PlaceInfo>
              <PlaceText>
                <PlaceName>Bar Tres Pins</PlaceName>
                <PlaceLine>rating: 3.7</PlaceLine>
                <PlaceLine>Total user rating: 126</PlaceLine>
                <PlaceAddress>Adress: La Ràpita</PlaceAddress>
              </PlaceText>
              <FavoriteSlot>
                <Button $color="#198754" $width={196}>Add as a favorite</Button>
              </FavoriteSlot>
            </PlaceInfo>
            <MapSection>
              <Button $color="#1fcaee" $width={1048} $focused>See in map</Button>
              <MapFrame>
                <Map />
                <ZoomControl>
                  <ZoomButton><svg viewBox="0 0 18 18"><path d="M7.4 0.5h3.2v6.9h6.9v3.2h-6.9v6.9H7.4v-6.9H.5V7.4h6.9z" /></svg></ZoomButton>
                  <ZoomButton $last><svg viewBox="0 0 18 18"><path d="M.5 9h17v3.3H.5z" /></svg></ZoomButton>
                </ZoomControl>
                <Attribution><a>Leaflet</a> | © <a>OpenStreetMap</a> contributors</Attribution>
              </MapFrame>
            </MapSection>
          </PlaceCard>
        </OuterCard>
      </Content>
    </Page>
  );
}
